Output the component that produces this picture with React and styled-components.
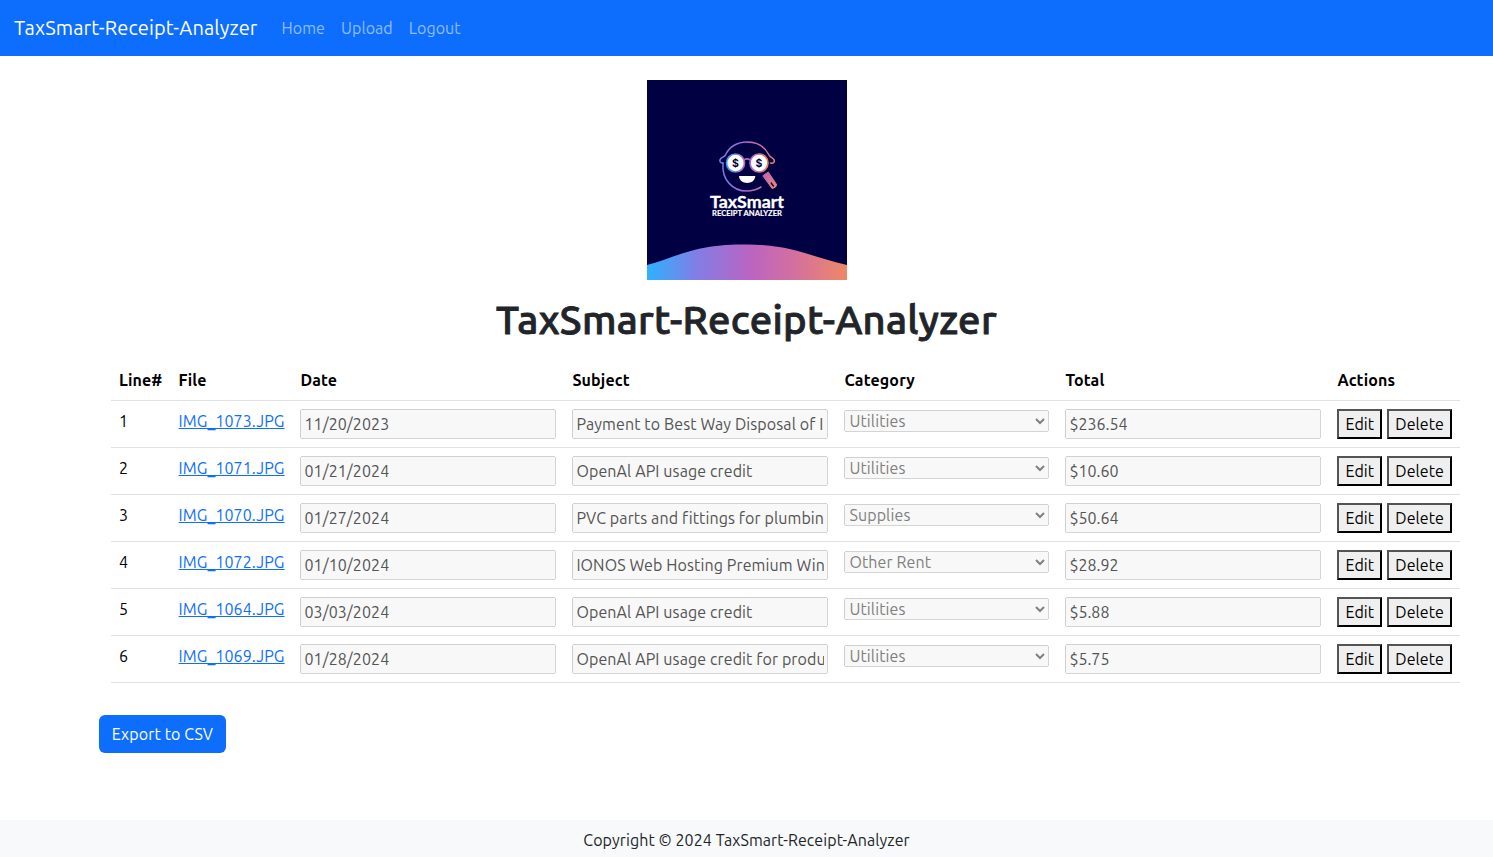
import React from "react";
import styled, { createGlobalStyle } from "styled-components";

const GlobalStyle = createGlobalStyle`
  *, *::before, *::after { box-sizing: border-box; }
  body {
    margin: 0;
    background: #fff;
    color: #212529;
    font-family: Ubuntu, "Noto Sans", sans-serif;
    font-size: 16px;
    line-height: 24px;
  }
`;

const Page = styled.div`
  display: flex;
  flex-direction: column;
  height: 857px;
  overflow: hidden;
`;

const Navbar = styled.nav`
  display: flex;
  align-items: center;
  flex: none;
  height: 56px;
  padding: 0 14px;
  background: #0d6efd;
`;

const Brand = styled.a`
  margin-right: 24px;
  color: #fff;
  font-size: 20px;
  line-height: 30px;
  white-space: nowrap;
  letter-spacing: 0.14px;
`;

const NavLink = styled.a`
  margin-right: 16px;
  color: rgba(255, 255, 255, 0.55);
  white-space: nowrap;
  letter-spacing: 0.06px;
`;

const Main = styled.main`
  display: flex;
  flex-direction: column;
  flex: 1;
  padding-top: 24px;
`;

const Logo = styled.svg`
  display: block;
  align-self: center;
  flex: none;
  width: 200px;
  height: 200px;
`;

const Title = styled.h1`
  margin: 16px 0 8px;
  text-align: center;
  font-size: 40px;
  font-weight: 500;
  line-height: 48px;
  letter-spacing: 0.3px;
  -webkit-text-stroke: 0.9px currentColor;
`;

const Table = styled.table`
  width: 1349px;
  margin: 8px 0 32px 111px;
  border-collapse: separate;
  border-spacing: 0;
  table-layout: fixed;
  color: #000;
`;

const HeadCell = styled.th`
  height: 41px;
  padding: 8px;
  border-bottom: 1px solid #dee2e6;
  text-align: left;
  font-weight: 700;
  letter-spacing: 0.13px;
`;

const Cell = styled.td`
  height: 47px;
  padding: 8px;
  border-bottom: 1px solid #dee2e6;
  vertical-align: top;
  white-space: nowrap;
`;

const FileLink = styled.a`
  color: #0d6efd;
  text-decoration: underline;
  letter-spacing: 0.08px;
`;

const Field = styled.input`
  display: block;
  width: 256px;
  height: 30px;
  margin: 0;
  font-family: inherit;
  font-size: inherit;
  line-height: 24px;
  letter-spacing: ${(p) => p.$spacing || 0}px;
`;

const Select = styled.select`
  display: block;
  width: 205px;
  height: 22px;
  margin: 1px 0 0;
  font-family: inherit;
  font-size: inherit;
  letter-spacing: 0.12px;

  &:disabled {
    opacity: 1;
  }
`;

const Actions = styled.div`
  display: flex;
  gap: 5px;
`;

const ActionButton = styled.button`
  width: ${(p) => p.$width}px;
  height: 30px;
  margin: 0;
  padding: 1px 0;
  border: 2px outset #000;
  background: #efefef;
  color: #000;
  font-family: inherit;
  font-size: inherit;
  line-height: 24px;
  letter-spacing: 0.05px;
`;

const ExportButton = styled.button`
  width: 127px;
  height: 38px;
  margin-left: 99px;
  padding: 0;
  border: 0;
  border-radius: 6px;
  background: #0d6efd;
  color: #fff;
  font-family: inherit;
  font-size: inherit;
  line-height: 24px;
  letter-spacing: 0.12px;
`;

const Footer = styled.footer`
  flex: none;
  height: 37px;
  padding-top: 8px;
  background: #f8f9fa;
  text-align: center;
  letter-spacing: 0.08px;
`;

const columns = [
  { label: "Line#", width: 59.6 },
  { label: "File", width: 121.8 },
  { label: "Date", width: 272 },
  { label: "Subject", width: 272 },
  { label: "Category", width: 221 },
  { label: "Total", width: 272 },
  { label: "Actions", width: 130.6 },
];

const receipts = [
  ["IMG_1073.JPG", "11/20/2023", "Payment to Best Way Disposal of Indiana", "Utilities", "$236.54"],
  ["IMG_1071.JPG", "01/21/2024", "OpenAl API usage credit", "Utilities", "$10.60"],
  ["IMG_1070.JPG", "01/27/2024", "PVC parts and fittings for plumbing", "Supplies", "$50.64"],
  ["IMG_1072.JPG", "01/10/2024", "IONOS Web Hosting Premium Windows", "Other Rent", "$28.92"],
  ["IMG_1064.JPG", "03/03/2024", "OpenAl API usage credit", "Utilities", "$5.88"],
  ["IMG_1069.JPG", "01/28/2024", "OpenAl API usage credit for product", "Utilities", "$5.75"],
];

function TaxSmartLogo() {
  return (
    <Logo viewBox="0 0 200 200" role="img" aria-label="TaxSmart Receipt Analyzer">
      <defs>
        <linearGradient id="hill" x1="0" x2="1" y1="0" y2="0">
          <stop offset="0" stopColor="#2db2ff" />
          <stop offset="0.25" stopColor="#827de5" />
          <stop offset="0.52" stopColor="#bb64c1" />
          <stop offset="0.75" stopColor="#d5719c" />
          <stop offset="1" stopColor="#ee8866" />
        </linearGradient>
        <linearGradient id="face" gradientUnits="userSpaceOnUse" x1="72" x2="128" y1="0" y2="0">
          <stop offset="0" stopColor="#6b7fe0" />
          <stop offset="0.45" stopColor="#a566cc" />
          <stop offset="1" stopColor="#e0806f" />
        </linearGradient>
        <linearGradient id="lensLeft" x1="0" x2="1" y1="0" y2="0">
          <stop offset="0" stopColor="#2f9cf5" />
          <stop offset="1" stopColor="#b266cc" />
        </linearGradient>
        <linearGradient id="lensRight" x1="0" x2="1" y1="0" y2="0">
          <stop offset="0" stopColor="#a266d6" />
          <stop offset="1" stopColor="#f08048" />
        </linearGradient>
        <linearGradient id="handle" x1="0" x2="1" y1="0" y2="1">
          <stop offset="0" stopColor="#bc62bd" />
          <stop offset="1" stopColor="#ef8a6c" />
        </linearGradient>
      </defs>
      <rect width="200" height="200" fill="#010043" />
      <path d="M0 185 C30 177 48 164 98 164.500 C145 164 167 178 200 185 V200 H0 Z" fill="url(#hill)" />
      <g fill="none" stroke="url(#face)" strokeWidth="1.500" strokeLinecap="round">
        <path d="M76 83 C73.500 83.500 72 81 73.500 79 C75 76.500 77 77.500 78.500 75 C82 67 90 62 100 62 C110 62 118 67 122 75 C123 77.500 125 77 126.500 79 C128.500 81.500 126.500 84 123.500 83" />
        <path d="M76 83 C74.500 100 86 111 99.500 111 C105 111 110 109.500 114 107" />
        <path d="M97 80 C99 78.500 101 78.500 103 80" />
      </g>
      <circle cx="88.500" cy="83" r="9" fill="#fff" stroke="url(#lensLeft)" strokeWidth="1.700" />
      <circle cx="112" cy="83" r="9" fill="#fff" stroke="url(#lensRight)" strokeWidth="1.700" />
      <g fill="#010043" fontFamily="Inter, sans-serif" fontSize="10.500" fontWeight="700" textAnchor="middle">
        <text x="88.500" y="86.800">$</text>
        <text x="112" y="86.800">$</text>
      </g>
      <path d="M92 96 H108.300 C108 105.200 92.300 105.200 92 96 Z" fill="#fff" />
      <path d="M115.800 95.800 L121.200 92 L129.600 104.500 Q129.800 107.300 125.200 108.600 Z" fill="url(#handle)" stroke="url(#handle)" strokeWidth="1" strokeLinejoin="round" />
      <path d="M124.200 103 L126.400 106" stroke="#010043" strokeWidth="1.300" strokeLinecap="round" />
      <g fill="#fff" fontFamily="Lato, sans-serif" fontWeight="700">
        <text x="63" y="128.400" fontSize="16.300" stroke="#fff" strokeWidth="0.3" textLength="74" lengthAdjust="spacingAndGlyphs">TaxSmart</text>
        <text x="65" y="136.200" fontSize="7" stroke="#fff" strokeWidth="0.15" textLength="70" lengthAdjust="spacingAndGlyphs">RECEIPT ANALYZER</text>
      </g>
    </Logo>
  );
}

export default function App() {
  return (
    <Page>
      <GlobalStyle />
      <Navbar>
        <Brand>TaxSmart-Receipt-Analyzer</Brand>
        <NavLink>Home</NavLink>
        <NavLink>Upload</NavLink>
        <NavLink>Logout</NavLink>
      </Navbar>
      <Main>
        <TaxSmartLogo />
        <Title>TaxSmart-Receipt-Analyzer</Title>
        <Table>
          <colgroup>
            {columns.map((c) => (
              <col key={c.label} style={{ width: c.width }} />
            ))}
          </colgroup>
          <thead>
            <tr>
              {columns.map((c) => (
                <HeadCell key={c.label}>{c.label}</HeadCell>
              ))}
            </tr>
          </thead>
          <tbody>
            {receipts.map(([file, date, subject, category, total], i) => (
              <tr key={file}>
                <Cell>{i + 1}</Cell>
                <Cell><FileLink>{file}</FileLink></Cell>
                <Cell><Field disabled $spacing={0.1} defaultValue={date} /></Cell>
                <Cell><Field disabled $spacing={0.11} defaultValue={subject} /></Cell>
                <Cell>
                  <Select disabled defaultValue={category}>
                    <option>{category}</option>
                  </Select>
                </Cell>
                <Cell><Field disabled defaultValue={total} /></Cell>
                <Cell>
                  <Actions>
                    <ActionButton $width={45}>Edit</ActionButton>
                    <ActionButton $width={65}>Delete</ActionButton>
                  </Actions>
                </Cell>
              </tr>
            ))}
          </tbody>
        </Table>
        <ExportButton>Export to CSV</ExportButton>
      </Main>
      <Footer>Copyright © 2024 TaxSmart-Receipt-Analyzer</Footer>
    </Page>
  );
}
